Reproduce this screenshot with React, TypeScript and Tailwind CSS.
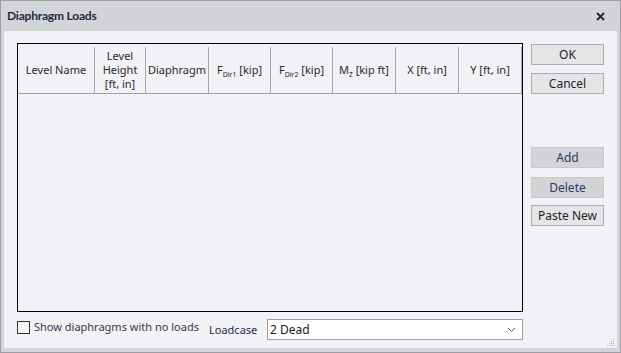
import React from 'react';

type Column = { key: string; width: string; label: React.ReactNode };

const columns: Column[] = [
  { key: 'name', width: 'w-[77px]', label: 'Level Name' },
  {
    key: 'height',
    width: 'w-[51px]',
    label: (
      <>
        Level
        <br />
        Height
        <br />
        [ft, in]
      </>
    ),
  },
  { key: 'diaphragm', width: 'w-[63px]', label: 'Diaphragm' },
  {
    key: 'f1',
    width: 'w-[62px]',
    label: (
      <>
        F<sub className="text-[7px] align-baseline relative top-[3px]">Dir1</sub> [kip]
      </>
    ),
  },
  {
    key: 'f2',
    width: 'w-[62px]',
    label: (
      <>
        F<sub className="text-[7px] align-baseline relative top-[3px]">Dir2</sub> [kip]
      </>
    ),
  },
  {
    key: 'mz',
    width: 'w-[63px]',
    label: (
      <>
        M<sub className="text-[8px] align-baseline relative top-[3px]">z</sub> [kip ft]
      </>
    ),
  },
  { key: 'x', width: 'w-[63px]', label: 'X [ft, in]' },
  { key: 'y', width: 'w-[63px]', label: 'Y [ft, in]' },
];

// Boutons de la colonne de droite
const DialogButton: React.FC<{ label: string; disabled?: boolean; className?: string }> = ({
  label,
  disabled,
  className = '',
}) => (
  <button
    type="button"
    className={`h-[21px] w-[73px] border text-[12px] leading-none flex items-center justify-center ${
      disabled
        ? 'bg-[#d4d4d6] border-[#c8c8ca] text-[#2a3a5e]'
        : 'bg-[#e5e5e7] border-[#adadad] text-[#1d1d1d]'
    } ${className}`}
  >
    {label}
  </button>
);

export default function App() {
  return (
    <div
      className="w-[621px] h-[353px] flex flex-col bg-[#d3d4d8] border border-[#9c9da3] text-[#2a2a2a]"
      style={{ fontFamily: '"Noto Sans", "Open Sans", sans-serif' }}
    >
      {/* Barre de titre */}
      <div className="h-[30px] flex items-center justify-between pl-[6px] pr-[15px] shrink-0">
        <span
          className="text-[12px] font-bold text-[#1e2840] tracking-[-0.2px]"
          style={{ fontFamily: 'Lato, "Noto Sans", sans-serif' }}
        >
          Diaphragm Loads
        </span>
        <svg width="9" height="9" viewBox="0 0 9 9" className="text-[#1e2430]">
          <path d="M1 1 L8 8 M8 1 L1 8" stroke="currentColor" strokeWidth="1.8" />
        </svg>
      </div>

      {/* Contenu */}
      <div className="relative flex-1 mx-[3px] mb-[4px] bg-[#f1f1f6] flex flex-col pl-[13px] pt-[12px] pr-[14px] pb-[8px]">
        <div className="flex flex-1 gap-[8px]">
          <div className="w-[506px] h-[269px] border border-black bg-[#f1f1f6] flex flex-col">
            <div className="h-[50px] border-b border-[#a0a0a0] flex">
              {columns.map((col) => (
                <div key={col.key} className={`${col.width} flex shrink-0`}>
                  <div className="flex-1 flex items-center justify-center text-center text-[11px] leading-[14px] text-[#2a2a2a] pt-[2px]">
                    <span className="whitespace-nowrap">{col.label}</span>
                  </div>
                  <div className="w-px mt-[3px] bg-[#a8a8a8]" />
                </div>
              ))}
            </div>
          </div>

          <div className="flex flex-col pt-[1px]">
            <DialogButton label="OK" />
            <DialogButton label="Cancel" className="mt-[8px]" />
            <DialogButton label="Add" disabled className="mt-[53px]" />
            <DialogButton label="Delete" disabled className="mt-[9px]" />
            <DialogButton label="Paste New" className="mt-[7px]" />
          </div>
        </div>

        {/* Ligne du bas */}
        <div className="flex items-center h-[21px] mt-[7px] w-[506px]">
          <div className="w-[192px] flex items-center shrink-0 -mt-[5px]">
            <div className="w-[13px] h-[13px] border border-[#333] bg-[#f7f7fa] shrink-0" />
            <span className="ml-[4px] text-[11px] text-[#3a3a4e] whitespace-nowrap">
              Show diaphragms with no loads
            </span>
          </div>
          <span className="w-[58px] shrink-0 text-[11px] text-[#1e2a50] mt-[1px] whitespace-nowrap">Loadcase</span>
          <div className="w-[256px] h-[21px] border border-[#a0a0a0] bg-white flex items-center justify-between pl-[2px] pr-[6px]">
            <span className="text-[12px] text-[#1a1a1a]">2 Dead</span>
            <svg width="9" height="6" viewBox="0 0 9 6">
              <path d="M1 1 L4.5 4.5 L8 1" fill="none" stroke="#555" strokeWidth="1" />
            </svg>
          </div>
        </div>

        {/* Poignée de redimensionnement */}
        <svg width="8" height="8" viewBox="0 0 8 8" className="absolute right-[2px] bottom-[1px]">
          <rect x="6" y="0" width="1" height="1" fill="#b0b0b0" />
          <rect x="4" y="2" width="1" height="1" fill="#b0b0b0" />
          <rect x="6" y="2" width="1" height="1" fill="#b0b0b0" />
          <rect x="2" y="4" width="1" height="1" fill="#b0b0b0" />
          <rect x="4" y="4" width="1" height="1" fill="#b0b0b0" />
          <rect x="6" y="4" width="1" height="1" fill="#b0b0b0" />
          <rect x="0" y="6" width="1" height="1" fill="#b0b0b0" />
          <rect x="2" y="6" width="1" height="1" fill="#b0b0b0" />
          <rect x="4" y="6" width="1" height="1" fill="#b0b0b0" />
          <rect x="6" y="6" width="1" height="1" fill="#b0b0b0" />
        </svg>
      </div>
    </div>
  );
}
